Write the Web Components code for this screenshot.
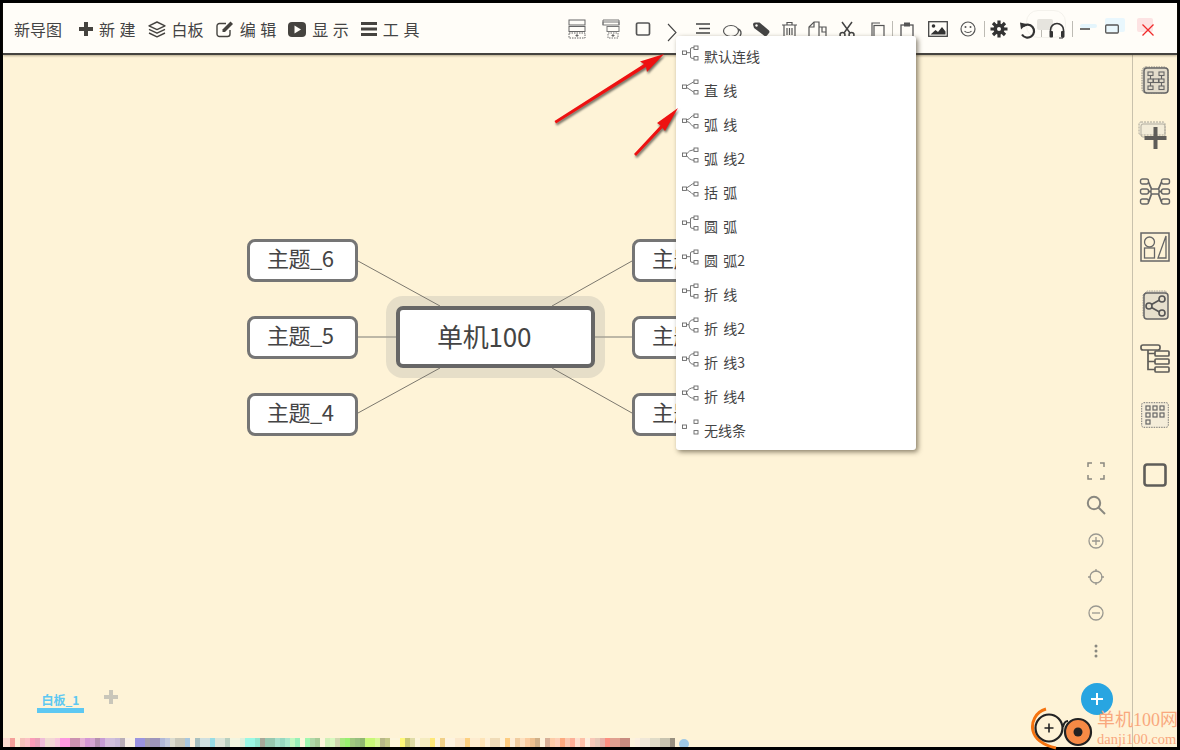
<!DOCTYPE html>
<html lang="zh-CN">
<head>
<meta charset="utf-8">
<title>新导图</title>
<style>
html,body{margin:0;padding:0;background:#000;overflow:hidden}
body{font-family:"Noto Sans CJK SC","Noto Sans",sans-serif;color:#444}
</style>
</head>
<body>
<app-window>
  <top-bar slot="top">
    <bar-btn slot="left" first>新导图</bar-btn>
    <bar-btn slot="left" icon="plus" w="14" h="14">新 建</bar-btn>
    <bar-btn slot="left" icon="layers" w="18" h="17">白板</bar-btn>
    <bar-btn slot="left" icon="edit" w="18" h="18">编 辑</bar-btn>
    <bar-btn slot="left" icon="play" w="18" h="15">显 示</bar-btn>
    <bar-btn slot="left" icon="bars" w="16" h="14">工 具</bar-btn>

    <bar-tool slot="right" cell="34" icon="split1" w="18" h="20"></bar-tool>
    <bar-tool slot="right" cell="34" icon="split2" w="18" h="20"></bar-tool>
    <bar-tool slot="right" cell="30" icon="square" w="16" h="16"></bar-tool>
    <bar-tool slot="right" cell="28" icon="chev" w="10" h="20" dy="4"></bar-tool>
    <bar-tool slot="right" cell="34" icon="lines" w="16" h="16"></bar-tool>
    <bar-tool slot="right" cell="26" icon="bubble" w="20" h="14" dy="2"></bar-tool>
    <bar-tool slot="right" cell="30" icon="tag" w="17" h="15"></bar-tool>
    <bar-tool slot="right" cell="26" icon="trash" w="15" h="18" dy="1"></bar-tool>
    <bar-tool slot="right" cell="30" icon="docs" w="19" h="18" dy="1"></bar-tool>
    <bar-tool slot="right" cell="30" icon="scissors" w="16" h="18" dy="1"></bar-tool>
    <bar-tool slot="right" cell="30" icon="copy" w="15" h="18" dy="2"></bar-tool>
    <bar-sep slot="right"></bar-sep>
    <bar-tool slot="right" cell="28" icon="clip" w="14" h="18" dy="2"></bar-tool>
    <bar-tool slot="right" cell="34" icon="image" w="20" h="16"></bar-tool>
    <bar-tool slot="right" cell="26" icon="smile" w="16" h="16"></bar-tool>
    <bar-sep slot="right" wide></bar-sep>
    <bar-tool slot="right" cell="28" icon="gear" w="18" h="18"></bar-tool>
    <bar-tool slot="right" cell="28" icon="undo" w="17" h="17" dy="1"></bar-tool>
    <bar-sep slot="right"></bar-sep>
    <bar-tool slot="right" cell="30" icon="headset" w="16" h="17" dy="1"></bar-tool>
    <bar-sep slot="right"></bar-sep>
    <bar-tool slot="right" cell="24" icon="min" w="10" h="10"></bar-tool>
    <bar-tool slot="right" cell="30" icon="max" w="14" h="10"></bar-tool>
    <bar-tool slot="right" cell="42" icon="close" w="14" h="14" dy="1"></bar-tool>
  </top-bar>

  <mind-canvas slot="canvas">
    <mind-node slot="nodes" x="244" y="184">主题_6</mind-node>
    <mind-node slot="nodes" x="244" y="261">主题_5</mind-node>
    <mind-node slot="nodes" x="244" y="338">主题_4</mind-node>
    <mind-node slot="nodes" x="629" y="184">主题_1</mind-node>
    <mind-node slot="nodes" x="629" y="261">主题_2</mind-node>
    <mind-node slot="nodes" x="629" y="338">主题_3</mind-node>
    <mind-node slot="nodes" x="393" y="251" root>单机100</mind-node>
    <zoom-rail slot="nodes"></zoom-rail>
    <tab-strip slot="tabs"></tab-strip>
    <color-strip slot="colors"></color-strip>
  </mind-canvas>

  <side-rail slot="side">
    <rail-icon h="50" icon="s1"></rail-icon>
    <rail-icon h="60" icon="s2"></rail-icon>
    <rail-icon h="52" icon="s3"></rail-icon>
    <rail-icon h="60" icon="s4"></rail-icon>
    <rail-icon h="56" icon="s5"></rail-icon>
    <rail-icon h="52" icon="s6"></rail-icon>
    <rail-icon h="60" icon="s7"></rail-icon>
    <rail-icon h="60" icon="s8"></rail-icon>
  </side-rail>

  <line-menu slot="over">
    <menu-row kind="elbow">默认连线</menu-row>
    <menu-row kind="straight">直 线</menu-row>
    <menu-row kind="arc">弧 线</menu-row>
    <menu-row kind="arc2">弧 线2</menu-row>
    <menu-row kind="brace">括 弧</menu-row>
    <menu-row kind="elbow">圆 弧</menu-row>
    <menu-row kind="elbow">圆 弧2</menu-row>
    <menu-row kind="square">折 线</menu-row>
    <menu-row kind="arc3">折 线2</menu-row>
    <menu-row kind="arc3">折 线3</menu-row>
    <menu-row kind="arc4">折 线4</menu-row>
    <menu-row kind="none">无线条</menu-row>
  </line-menu>
  <red-arrows slot="over"></red-arrows>
  <danji-mark slot="over"></danji-mark>
</app-window>

<script>
const D='#45433f';
const BG='#fef3d7';
const ICONS={
plus:[14,14,`<path fill="${D}" d="M5 0h4v5h5v4H9v5H5V9H0V5h5z"/>`],
layers:[18,17,`<g fill="none" stroke="${D}" stroke-width="1.4" stroke-linejoin="round"><path d="M9 1l8 3.8-8 3.8-8-3.8z"/><path d="M1 8.4l8 3.8 8-3.8"/><path d="M1 12l8 3.8 8-3.8"/></g>`],
edit:[18,18,`<path fill="none" stroke="${D}" stroke-width="1.4" d="M14 10v4a2.5 2.5 0 0 1-2.5 2.5h-8A2.5 2.5 0 0 1 1 14V6a2.5 2.5 0 0 1 2.5-2.5H10"/><path fill="${D}" d="M6.5 9.500L14.500 1.500l2.500 2.500-8 8H6.500z"/>`],
play:[18,15,`<rect width="18" height="15" rx="4" fill="${D}"/><path fill="#fffdf8" d="M6.500 3.500l6.500 4-6.500 4z"/>`],
bars:[16,14,`<path fill="${D}" d="M0 0h16v3H0zM0 5.500h16v3H0zM0 11h16v3H0z"/>`],
split1:[18,20,`<g fill="none" stroke="#666" stroke-width="1"><rect x="1" y="1" width="16" height="5"/><rect x="1" y="7.500" width="16" height="5"/><rect x="1" y="14" width="16" height="5" stroke-dasharray="1.500 1"/></g><path stroke="#666" d="M9 15v3M7.500 16.500h3"/>`],
split2:[18,20,`<g fill="none" stroke="#777" stroke-width="1"><path d="M1 6V1h16v5"/><rect x="1" y="3" width="16" height="3"/><rect x="5" y="7.500" width="12" height="5"/><rect x="6" y="14" width="10" height="5" stroke-dasharray="1.500 1"/></g><path stroke="#666" d="M11 15v3M9.500 16.500h3"/>`],
square:[16,16,`<rect x="1.500" y="2" width="13" height="12" rx="1.500" fill="none" stroke="#555" stroke-width="1.700"/>`],
chev:[10,20,`<path fill="none" stroke="#444" stroke-width="1.100" d="M1 1l8 8.500-8 8.500"/>`],
lines:[16,16,`<path fill="none" stroke="#444" stroke-width="1.300" d="M1 3h14M4 7.500h11M1 12h14"/>`],
bubble:[20,14,`<ellipse cx="8" cy="7" rx="7.500" ry="5.500" fill="#fffdf8" stroke="#555" stroke-width="1.200"/><path fill="none" stroke="#555" stroke-width="1.400" d="M15 5c3 1 4 4 2 7"/>`],
tag:[17,15,`<path fill="#444" d="M0 2.500A2 2 0 0 1 2 .500h4.500l9.500 8a2 2 0 0 1 0 2.500l-2 2.500a2 2 0 0 1-2.800.200L1 6z"/><circle cx="3.500" cy="3.500" r="1.200" fill="#fffdf8"/>`],
trash:[15,18,`<g fill="none" stroke="#555" stroke-width="1.200"><path d="M0 4h15M5 4V1.500h5V4M2 4v13h11V4"/><path d="M5 7v7M7.500 7v7M10 7v7"/></g>`],
docs:[19,18,`<g fill="none" stroke="#555" stroke-width="1.200"><path d="M1 17V6l5-5h5v16z"/><path d="M6 1v5H1"/><path d="M11 6h7v11h-7M14 6v5h4"/></g>`],
scissors:[16,18,`<g fill="none" stroke="#444" stroke-width="1.500"><circle cx="3.500" cy="14" r="2.500"/><circle cx="12.500" cy="14" r="2.500"/><path d="M5 12L13 1M11 12L3 1"/></g>`],
copy:[15,18,`<g fill="none" stroke="#555" stroke-width="1.200"><path d="M2 14V1h8"/><rect x="4" y="3.500" width="10" height="14"/></g>`],
clip:[14,18,`<g fill="none" stroke="#555" stroke-width="1.300"><rect x="1" y="3" width="12" height="14"/></g><rect x="4" y="0.500" width="6" height="4" fill="#555"/>`],
image:[20,16,`<rect x=".7" y=".7" width="18.600" height="14.600" fill="#fffdf8" stroke="#444" stroke-width="1.300"/><circle cx="5.500" cy="5" r="1.800" fill="#333"/><path fill="#333" d="M2.500 13.500l5-4.500 2.500 2 4-5 3.500 4.500v3z"/>`],
smile:[16,16,`<circle cx="8" cy="8" r="7" fill="none" stroke="#555" stroke-width="1.200"/><circle cx="5.500" cy="6" r="1" fill="#555"/><circle cx="10.500" cy="6" r="1" fill="#555"/><path fill="none" stroke="#555" stroke-width="1.200" d="M4.500 10c1.500 2 5.500 2 7 0"/>`],
gear:[18,18,`<circle cx="9" cy="9" r="5.500" fill="#333"/><g stroke="#333" stroke-width="3.200"><path d="M9 .500v17M.500 9h17M3 3l12 12M15 3L3 15"/></g><circle cx="9" cy="9" r="2" fill="#fffdf8"/>`],
undo:[17,17,`<path fill="none" stroke="#333" stroke-width="2.200" d="M4 4.500a6.500 6.500 0 1 1-1 8"/><path fill="#333" d="M1 .500l6.500 1.500L2 7.500z"/>`],
headset:[16,17,`<path fill="none" stroke="#333" stroke-width="1.600" d="M1.500 10V8a6.500 6.500 0 0 1 13 0v2"/><rect x="0.500" y="9" width="3.500" height="6.500" rx="1" fill="#333"/><rect x="12" y="9" width="3.500" height="6.500" rx="1" fill="#333"/><path fill="none" stroke="#333" d="M14 15v1h-4"/>`],
min:[10,10,`<path stroke="#333" stroke-width="1.400" d="M0 5h10"/>`],
max:[14,10,`<rect x=".7" y="1" width="12.600" height="8" rx="1" fill="none" stroke="#555" stroke-width="1.300"/>`],
close:[14,14,`<path stroke="#f02a2a" stroke-width="1.300" d="M1.500 1.500l11 11M12.500 1.500l-11 11"/>`],
s1:[30,30,`<rect x="2" y="2" width="26" height="26" rx="4" fill="#e6dfcc" stroke="#8a867c" stroke-dasharray="1.500 1"/><rect x="4" y="3" width="24" height="25" rx="3" fill="#e3dccb" stroke="#666" stroke-width="1.500"/><g fill="none" stroke="#666" stroke-width="1.100"><rect x="8" y="7" width="5" height="3.500"/><rect x="8" y="14" width="5" height="3.500"/><rect x="8" y="21" width="5" height="3.500"/><rect x="19" y="7" width="5" height="3.500"/><rect x="19" y="14" width="5" height="3.500"/><rect x="19" y="21" width="5" height="3.500"/><rect x="13.500" y="14" width="5" height="3.500"/><path d="M10.500 10.500v3.500M10.500 17.500V21M21.500 10.500v3.500M21.500 17.500V21"/></g>`],
s2:[32,30,`<rect x="0" y="2" width="26" height="13" rx="2" fill="#f3ecd8" stroke="#a8a498" stroke-dasharray="2 1"/><rect x="2" y="4" width="24" height="13" rx="2" fill="none" stroke="#b0ac9f"/><path fill="#5f5d59" d="M14.500 7h4v9h9v4h-9v9h-4v-9h-9v-4h9z"/>`],
s3:[32,26,`<g fill="none" stroke="#666" stroke-width="1.400"><rect x="12" y="11" width="8" height="5" rx="1"/><rect x="1.500" y="1" width="8" height="5" rx="2"/><rect x="1.500" y="11" width="8" height="5" rx="2"/><rect x="1.500" y="21" width="8" height="5" rx="2"/><rect x="22.500" y="1" width="8" height="5" rx="2"/><rect x="22.500" y="11" width="8" height="5" rx="2"/><rect x="22.500" y="21" width="8" height="5" rx="2"/><path stroke-width="1.800" d="M9.500 4l3 7M9.500 24l3-8M22.500 4l-3 7M22.500 24l-3-8M9.500 13.500H12M20 13.500h2.500"/></g>`],
s4:[30,30,`<g fill="none" stroke="#666" stroke-width="1.300"><rect x="1" y="1" width="28" height="28" stroke-width="1.500"/><circle cx="9.500" cy="10" r="5"/><rect x="4.500" y="16" width="10" height="10"/><path d="M18 26h8V4z"/></g>`],
s5:[30,30,`<path d="M3 5l4-4h19v25H3z" fill="#e6dfcc" stroke="#a8a498" stroke-dasharray="1.500 1"/><rect x="4" y="3" width="24" height="26" rx="3" fill="#e6dfcc" stroke="#666" stroke-width="1.500"/><g fill="none" stroke="#555" stroke-width="1.600"><circle cx="9" cy="16" r="3"/><circle cx="22" cy="9" r="3"/><circle cx="22" cy="23" r="3"/><path d="M11.500 14.500l8-4.500M11.500 17.500l8 4.500"/></g>`],
s6:[30,30,`<g fill="none" stroke="#5f5d59" stroke-width="1.700"><rect x="1" y="1" width="19" height="5" rx="2"/><rect x="15" y="7" width="14" height="5" rx="1"/><rect x="15" y="15" width="14" height="5" rx="1"/><rect x="15" y="23" width="14" height="5" rx="1"/><path d="M8 6v19.500h7M8 9.500h7M8 17.500h7"/></g>`],
s7:[28,26,`<rect x=".7" y=".7" width="26.600" height="24.600" rx="2" fill="#f5edd9" stroke="#777" stroke-dasharray="1.500 1"/><g fill="none" stroke="#666" stroke-width="1.200"><rect x="5" y="4" width="4" height="4"/><rect x="12" y="4" width="4" height="4"/><rect x="19" y="4" width="4" height="4"/><rect x="5" y="11" width="4" height="4"/><rect x="12" y="11" width="4" height="4"/><rect x="19" y="11" width="4" height="4"/><rect x="5" y="18" width="4" height="4"/></g>`],
s8:[24,24,`<rect x="1.500" y="1.500" width="21" height="21" rx="2.500" fill="none" stroke="#5f5d59" stroke-width="2.600"/>`],
expand:[18,18,`<path fill="none" stroke="#8a8880" stroke-width="1.500" d="M1 5V1h4M13 1h4v4M17 13v4h-4M5 17H1v-4"/>`],
search:[20,20,`<g fill="none" stroke="#8a8880" stroke-width="2"><circle cx="8" cy="8" r="6.200"/><path d="M12.500 12.500L19 19"/></g>`],
zplus:[16,16,`<g fill="none" stroke="#9a9890" stroke-width="1.300"><circle cx="8" cy="8" r="7"/><path d="M4 8h8M8 4v8"/></g>`],
target:[16,16,`<g fill="none" stroke="#9a9890" stroke-width="1.300"><circle cx="8" cy="8" r="6"/><path d="M8 0v3M8 13v3M0 8h3M13 8h3"/></g>`],
zminus:[16,16,`<g fill="none" stroke="#9a9890" stroke-width="1.300"><circle cx="8" cy="8" r="7"/><path d="M4 8h8"/></g>`],
dots:[4,14,`<g fill="#8a8880"><circle cx="2" cy="2" r="1.500"/><circle cx="2" cy="7" r="1.500"/><circle cx="2" cy="12" r="1.500"/></g>`]
};
function svgOf(name,w,h){
  const i=ICONS[name];
  return `<svg xmlns="http://www.w3.org/2000/svg" width="${w||i[0]}" height="${h||i[1]}" viewBox="0 0 ${i[0]} ${i[1]}" style="display:block;overflow:visible">${i[2]}</svg>`;
}
function make(tag,html){
  customElements.define(tag,class extends HTMLElement{
    constructor(){super();this.attachShadow({mode:'open'});}
    connectedCallback(){this.shadowRoot.innerHTML=typeof html==='function'?html(this):html;}
  });
}
const FONT='"Noto Sans CJK SC","Noto Sans",sans-serif';

make('app-window',`<style>
:host{display:grid;grid-template-rows:auto 1fr;grid-template-columns:1fr;width:1180px;height:750px;box-sizing:border-box;padding:3px;background:#000;position:relative;overflow:hidden;font-family:${FONT}}
.main{display:flex;min-height:0}
</style>
<slot name="top"></slot>
<div class="main"><slot name="canvas"></slot><slot name="side"></slot></div>
<slot name="over"></slot>`);

make('top-bar',`<style>
:host{display:flex;align-items:center;justify-content:space-between;height:52px;box-sizing:border-box;padding:4px 8px 2px 11px;background:#fffdf8;border-bottom:2px solid #45433f;box-shadow:0 1px 2px rgba(70,60,30,.4);position:relative;z-index:2}
.g{display:flex;align-items:center}
.ghost{position:absolute;border-radius:2px}
</style>
<span class="ghost" style="left:1023px;top:7px;width:38px;height:26px;border:1px solid #f4f2ec;border-radius:12px"></span>
<span class="ghost" style="left:1034px;top:16px;width:16px;height:11px;background:#e6e4de"></span>
<span class="ghost" style="left:1077px;top:21px;width:17px;height:4px;background:#e4f5fc"></span>
<span class="ghost" style="left:1102px;top:15px;width:20px;height:14px;background:#e9f7fd"></span>
<span class="ghost" style="left:1134px;top:15px;width:16px;height:14px;background:#fde3e3"></span>
<div class="g"><slot name="left"></slot></div>
<div class="g"><slot name="right"></slot></div>`);

make('bar-btn',h=>{
  const ic=h.getAttribute('icon');
  return `<style>
  :host{display:flex;align-items:center;gap:6px;margin-right:${h.hasAttribute('first')?17:12}px;font-size:16px;line-height:20px;color:#444;white-space:pre;word-spacing:1px}
  </style>${ic?svgOf(ic,+h.getAttribute('w'),+h.getAttribute('h')):''}<slot></slot>`;
});

make('bar-tool',h=>`<style>
:host{display:flex;justify-content:center;align-items:center;width:${h.getAttribute('cell')}px;height:28px;position:relative;top:${h.getAttribute('dy')||0}px}
</style>${svgOf(h.getAttribute('icon'),+h.getAttribute('w'),+h.getAttribute('h'))}`);

make('bar-sep',h=>`<style>
:host{display:block;width:1px;height:16px;background:#bdbbb4;margin-left:${h.hasAttribute('wide')?3:0}px}
</style>`);

make('mind-canvas',`<style>
:host{display:flex;flex-direction:column;flex:1;min-width:0;background:${BG}}
.stage{flex:1;position:relative;min-height:0}
svg{position:absolute;left:0;top:0;z-index:1;pointer-events:none}
</style>
<div class="stage">
<svg width="1129" height="650" fill="none">
<g stroke="#7c786e" stroke-width="1">
<path d="M355 206L437 251M629 206L549 251M355 358L437 313M629 358L549 313"/></g>
<path d="M355 282H393M592 282H629" stroke="#a8a496" stroke-width="1.600"/>
</svg>
<slot name="nodes"></slot>
</div>
<slot name="tabs"></slot>
<slot name="colors"></slot>`);

make('mind-node',h=>{
  const root=h.hasAttribute('root');
  return `<style>
  :host{position:absolute;left:${h.getAttribute('x')}px;top:${h.getAttribute('y')}px;box-sizing:border-box;display:flex;align-items:center;background:#fff;white-space:nowrap;color:#444;
  ${root?`width:199px;height:62px;border:4px solid #666;border-radius:7px;font-size:26px;padding:0 0 4px 37px;letter-spacing:-.2px;box-shadow:0 0 0 10px #e6dec8;`
        :`width:111px;height:43px;border:3px solid #757575;border-radius:8px;font-size:22px;padding:0 0 7px 17px;letter-spacing:-.5px;`}}
  </style><slot></slot>`;
});

make('zoom-rail',()=>{
  const it=[[34,'expand'],[34,'search'],[38,'zplus'],[34,'target'],[38,'zminus'],[38,'dots']];
  return `<style>
  :host{position:absolute;left:1073px;top:399px;display:flex;flex-direction:column;width:40px;z-index:2}
  div{display:flex;align-items:center;justify-content:center}
  .fab{position:absolute;left:5px;top:229px;width:32px;height:32px;border-radius:50%;background:#28a5e1}
  </style>`+it.map(a=>`<div style="height:${a[0]}px">${svgOf(a[1])}</div>`).join('')+
  `<div class="fab"><svg width="14" height="14"><path d="M7 1v12M1 7h12" stroke="#fff" stroke-width="2"/></svg></div>`;
});

make('tab-strip',`<style>
:host{display:flex;align-items:flex-start;height:0;position:relative;top:-46px;padding-left:34px}
.t{display:flex;flex-direction:column;align-items:center;width:47px}
.l{font-size:12px;font-weight:700;line-height:16px;color:#5dc8f2;height:16px}
.u{align-self:stretch;height:5px;background:#5dc8f2}
svg{margin:-2px 0 0 20px}
</style>
<div class="t"><span class="l">白板_1</span><span class="u"></span></div>
<svg width="14" height="14"><path fill="#c9c6ba" d="M5 0h4v5h5v4H9v5H5V9H0V5h5z"/></svg>`);

make('color-strip',()=>{
  const c=`#fddcd0 #f5a09a #fff0d8 #f6c0ba #fcc0c5 #fb9bb8 #e8a0b8 #f0bdd8 #f0dcd0 #f3d5d5 #f7c5dc #fd97e0 #fd97e0 #cc92b0 #cc92b0 #e5b0d5 #d497d5 #d5a5d0 #b590b0 #c79cd5 #d5bcdc #cfbfdc #c6b8d8 #b8adb8 #f8efe5 #fbf3e0 #9b94e0 #9b94e0 #a59fb0 #9e95bb #9e95bb #b0b8d8 #c0c8dc #dbdcd0 #c8c8ba #c8c8ba #a8c8e0 #fdf2dc #a8c0c0 #d0e0e0 #d0e0e0 #98dce5 #dce5d8 #dce5d8 #b8d0c0 #f3f5e0 #f3f5e0 #dff0dc #9af8e5 #9af8e5 #90e8d0 #a8a89a #98c8b0 #98c8b0 #a8e0cc #98d8c0 #a8e8cc #c0f8c0 #98f0b8 #fdf8dc #a0f8b0 #b0d8a8 #a8cc98 #fdf5dc #d0f0b8 #d8f8c0 #d0d8b0 #a8e880 #98f070 #a0c880 #98c080 #90b870 #c8f878 #c8f878 #d8f898 #b8b888 #c4c888 #fdf5dc #fdf5dc #fef878 #c8c878 #e0dca8 #fdf5dc #f5ecc0 #f5ecc0 #fee878 #fdf5dc #f0d088 #fdf3e0 #fdf3e0 #fbe8cc #fbe8cc #fdd080 #fdecd0 #fdecd0 #fde4b8 #fdf0d8 #f0dcb8 #f0dcb8 #fdf3dc #fdcc80 #fdeed8 #f0cca0 #fde0c0 #fbcca0 #ecc090 #d0b088 #fdf3dc #d8b098 #fdcca8 #fdd0b8 #fdaa80 #fbc8b0 #fdb098 #fde0d0 #fdc0a8 #fdeede #f8c8b8 #e8c8b8 #e8b0a8 #fd8e80 #e0a090 #e0a090 #c88c80 #c88c80 #fdf3dc #fbf0e0 #f0e8d8 #f0e8d8 #e0dcc8 #e0dcc8 #c8c4b0 #c8c4b0 #989080`.split(' ');
  return `<style>
  :host{display:flex;height:9px;flex:none;position:relative;overflow:hidden}
  i{display:block;flex:none;width:5px;height:9px}
  i:first-of-type{width:7px}
  b{display:block;width:10px;height:10px;border-radius:50%;background:#9ec8e5;margin:1px 0 0 4px}
  </style>`+c.map(x=>`<i style="background:${x}"></i>`).join('')+`<b></b>`;
});

make('side-rail',`<style>
:host{display:flex;flex-direction:column;flex:none;width:45px;box-sizing:border-box;border-left:1px solid #c9c1ac;background:${BG}}
</style><slot></slot>`);
make('rail-icon',h=>`<style>
:host{display:flex;align-items:center;justify-content:center;height:${h.getAttribute('h')}px;flex:none}
</style>${svgOf(h.getAttribute('icon'))}`);

make('line-menu',`<style>
:host{position:absolute;left:676px;top:36px;width:240px;height:414px;box-sizing:border-box;padding:4px 0 2px;background:#fff;border-radius:3px;box-shadow:2px 2px 5px rgba(60,50,30,.6);display:flex;flex-direction:column;z-index:3}
</style><slot></slot>`);

const EDGE={
 elbow:'M5.500 8.700H9.500V5Q9.500 3.700 11 3.700H13M9.500 8.700V13Q9.500 14.300 11 14.300H13',
 square:'M5.500 8.700H9.500V3.700H13M9.500 8.700V14.300H13',
 straight:'M5.500 8L13 3.700M5.500 9.400L13 14.300',
 arc:'M5.500 8Q9 7 10 5Q11 3.700 13 3.700M5.500 9.400Q9 10 10 12.500Q11 14.300 13 14.300',
 arc2:'M5.500 8Q8 4 13 3.700M5.500 9.400Q8 14 13 14.300',
 arc3:'M5.500 8.700H8Q8 3.700 13 3.700M8 8.700Q8 14.300 13 14.300',
 arc4:'M5.500 8.700Q7.500 3.700 13 3.700M5.500 8.700Q7.500 14.300 13 14.300',
 brace:'M5.500 8L10 5Q11 3.700 13 3.700M5.500 9.400L10 12.500Q11 14.300 13 14.300',
 none:''
};
make('menu-row',h=>`<style>
:host{display:flex;align-items:center;height:34px;box-sizing:border-box;padding:0 0 2px 28px;flex:none;font-size:14px;line-height:18px;color:#444;white-space:pre;word-spacing:2px;position:relative}
svg{position:absolute;left:5px;top:4px}
</style>
<svg width="18" height="18" viewBox="0 0 18 18" fill="none" stroke="#666" stroke-width=".9">
<rect x="1.500" y="7" width="4" height="3.400"/><rect x="13" y="2" width="4" height="3.400"/><rect x="13" y="12.600" width="4" height="3.400"/>
<path d="${EDGE[h.getAttribute('kind')]}"/></svg><slot></slot>`);

make('red-arrows',`<style>
:host{position:absolute;left:0;top:0;width:1180px;height:750px;pointer-events:none;z-index:4}
svg{filter:drop-shadow(1px 2px 1px rgba(0,0,0,.55))}
</style>
<svg width="1180" height="750">
<path fill="#ee1111" d="M664 54L640 61.500L644 64L554.500 121L556 123.500L646 67L647 72Z"/>
<path fill="#ee1111" d="M678 108L657 123L660.500 125.500L634 154L636 156L662.500 128L665 131Z"/>
</svg>`);

make('danji-mark',`<style>
:host{position:absolute;left:1030px;top:706px;width:150px;height:44px;z-index:4;overflow:hidden;pointer-events:none}
svg{position:absolute;left:0;top:0}
.a{position:absolute;left:67px;top:3px;font:18px/22px "Liberation Serif","Noto Sans CJK SC",serif;color:#f9a87e;white-space:nowrap}
.b{position:absolute;left:67px;top:25px;font:14.500px/16px "Liberation Serif",serif;color:#f9a87e;white-space:nowrap}
</style>
<svg width="70" height="44" fill="none">
<path d="M16 3C5 6 1 17 3 25C5 33 13 39 26 42" stroke="#f5730f" stroke-width="3"/>
<circle cx="19" cy="22" r="13.500" fill="${BG}" stroke="#222" stroke-width="2.200"/>
<path d="M14.500 22h9M19 17.500v9" stroke="#222" stroke-width="1.600"/>
<path d="M33 21c1-5 3-6 5-6" stroke="#222" stroke-width="2"/>
<circle cx="48" cy="26" r="13" fill="#f68a45" stroke="#222" stroke-width="2.200"/>
<circle cx="48" cy="26" r="4.500" fill="#222"/>
</svg>
<span class="a">单机100网</span><span class="b">danji100.com</span>`);
</script>
</body>
</html>
